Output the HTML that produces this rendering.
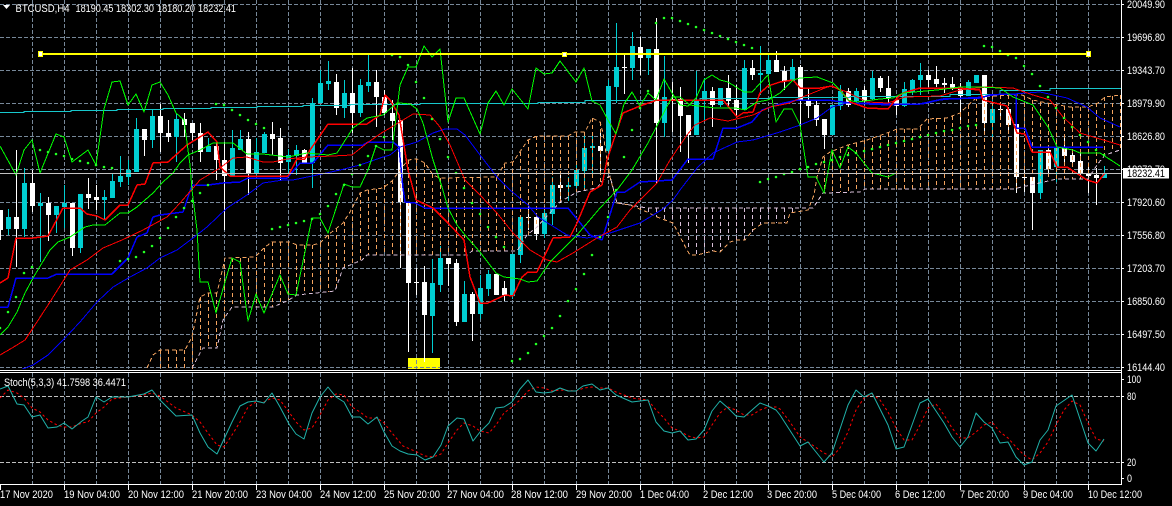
<!DOCTYPE html>
<html><head><meta charset="utf-8"><style>
html,body{margin:0;padding:0;background:#000;width:1172px;height:506px;overflow:hidden}
svg{display:block}
text{font-family:"Liberation Sans",sans-serif;font-size:11px;fill:#fff}
.g{stroke:#778899;stroke-width:1;stroke-dasharray:4 2;fill:none;shape-rendering:crispEdges}
.l{fill:none;stroke-linejoin:round;shape-rendering:crispEdges}
.n{fill:none;stroke-linejoin:round}
</style></head><body>
<svg width="1172" height="506" viewBox="0 0 1172 506" xmlns="http://www.w3.org/2000/svg">
<defs><clipPath id="m"><rect x="0" y="0" width="1121" height="369"/></clipPath><clipPath id="s"><rect x="0" y="373" width="1121" height="111"/></clipPath>
<path id="sar" fill="none" stroke-linecap="round" d="M0 328h.01M8 312h.01M16 297h.01M24 273h.01M32 267h.01M40 150h.01M48 152h.01M56 154h.01M64 156h.01M72 159h.01M80 161h.01M88 163h.01M96 165h.01M104 167h.01M112 168h.01M120 261h.01M128 259h.01M136 257h.01M144 252h.01M152 246h.01M160 238h.01M168 228h.01M176 217h.01M184 208h.01M192 201h.01M200 193h.01M208 185h.01M216 104h.01M224 105h.01M232 110h.01M240 115h.01M248 120h.01M256 124h.01M264 128h.01M272 229h.01M280 227h.01M288 225h.01M296 223h.01M304 221h.01M312 219h.01M320 214h.01M328 206h.01M336 194h.01M344 185h.01M352 174h.01M360 165h.01M368 156h.01M376 146h.01M384 137h.01M392 55h.01M400 57h.01M408 65h.01M416 82h.01M424 98h.01M432 119h.01M440 139h.01M448 157h.01M456 173h.01M464 188h.01M472 203h.01M480 214h.01M488 227h.01M496 237h.01M504 247h.01M512 361h.01M520 359h.01M528 353h.01M536 344h.01M544 336h.01M552 328h.01M560 316h.01M568 301h.01M576 289h.01M584 274h.01M592 255h.01M600 237h.01M608 217h.01M616 190h.01M624 157h.01M632 130h.01M640 108h.01M648 91h.01M656 23h.01M664 18h.01M672 18h.01M680 21h.01M688 24h.01M696 27h.01M704 30h.01M712 33h.01M720 36h.01M728 39h.01M736 42h.01M744 45h.01M752 48h.01M760 182h.01M768 179h.01M776 177h.01M784 174h.01M792 172h.01M800 169h.01M808 167h.01M816 164h.01M824 162h.01M832 160h.01M840 157h.01M848 155h.01M856 153h.01M864 151h.01M872 149h.01M880 147h.01M888 145h.01M896 143h.01M904 141h.01M912 139h.01M920 137h.01M928 135h.01M936 133h.01M944 131h.01M952 130h.01M960 128h.01M968 126h.01M976 125h.01M984 46h.01M992 47h.01M1000 51h.01M1008 55h.01M1016 58h.01M1024 66h.01M1032 74h.01M1040 86h.01M1048 97h.01M1056 108h.01M1064 118h.01M1072 127h.01M1080 135h.01M1088 142h.01M1096 150h.01M1104 155h.01"/>
</defs>
<rect width="1172" height="506" fill="#000"/>
<rect x="408" y="358" width="32" height="11" fill="#ffff00"/>
<path class="g" d="M0 4.5H1121M0 37.5H1121M0 70.5H1121M0 103.5H1121M0 136.5H1121M0 169.5H1121M0 202.5H1121M0 235.5H1121M0 268.5H1121M0 301.5H1121M0 334.5H1121M0 367.5H1121"/>
<path class="g" d="M32.5 0V369M64.5 0V369M96.5 0V369M128.5 0V369M160.5 0V369M192.5 0V369M224.5 0V369M256.5 0V369M288.5 0V369M320.5 0V369M352.5 0V369M384.5 0V369M416.5 0V369M448.5 0V369M480.5 0V369M512.5 0V369M544.5 0V369M576.5 0V369M608.5 0V369M640.5 0V369M672.5 0V369M704.5 0V369M736.5 0V369M768.5 0V369M800.5 0V369M832.5 0V369M864.5 0V369M896.5 0V369M928.5 0V369M960.5 0V369M992.5 0V369M1024.5 0V369M1056.5 0V369M1088.5 0V369"/>
<path class="g" d="M32.5 373V484M64.5 373V484M96.5 373V484M128.5 373V484M160.5 373V484M192.5 373V484M224.5 373V484M256.5 373V484M288.5 373V484M320.5 373V484M352.5 373V484M384.5 373V484M416.5 373V484M448.5 373V484M480.5 373V484M512.5 373V484M544.5 373V484M576.5 373V484M608.5 373V484M640.5 373V484M672.5 373V484M704.5 373V484M736.5 373V484M768.5 373V484M800.5 373V484M832.5 373V484M864.5 373V484M896.5 373V484M928.5 373V484M960.5 373V484M992.5 373V484M1024.5 373V484M1056.5 373V484M1088.5 373V484"/>
<path d="M0 396.5H1121M0 462.5H1121" stroke="#c0c0c0" stroke-dasharray="4 2" fill="none" shape-rendering="crispEdges"/>

<g clip-path="url(#m)">
<!-- white wicks -->
<path stroke="#fff" fill="none" shape-rendering="crispEdges" d="M.5 210V240M16.5 150V267M32.5 170V212M48.5 197V241M72.5 203V256M88.5 178V209M96.5 185V210M144.5 129V156M160.5 104V152M168.5 120V142M184.5 113V137M192.5 123V140M200.5 123V162M216.5 142V180M224.5 142V230M248.5 132V195M272.5 122V155M280.5 128V180M304.5 149V163M336.5 74V115M352.5 68V133M376.5 70V127M384.5 90V115M392.5 100V140M400.5 120V268M408.5 202V352M416.5 268V295M424.5 266V362M448.5 258V286M456.5 259V326M472.5 292V341M496.5 274V295M504.5 281V301M528.5 203V230M536.5 213V240M560.5 172V203M600.5 130V172M624.5 55V94M640.5 37V75M656.5 18V183M672.5 82V132M680.5 87V152M688.5 115V163M712.5 87V127M728.5 75V107M736.5 85V117M752.5 60V80M776.5 51V72M784.5 66V90M800.5 65V127M808.5 88V118M816.5 100V126M824.5 119V149M848.5 88V107M864.5 86V105M880.5 76V92M888.5 76V103M896.5 96V115M928.5 70V87M936.5 66V87M944.5 78V93M952.5 77V90M960.5 83V122M984.5 75V133M1000.5 105V120M1008.5 107V133M1016.5 124V193M1024.5 167V192M1032.5 177V230M1048.5 147V177M1064.5 137V166M1072.5 150V167M1080.5 150V175M1088.5 167V193M1096.5 168V205"/>
<!-- cyan wicks -->
<path stroke="#00CED1" fill="none" shape-rendering="crispEdges" d="M8.5 209V235M24.5 168V237M40.5 193V262M56.5 206V233M64.5 185V228M80.5 194V253M104.5 190V220M112.5 173V198M120.5 156V187M128.5 160V185M136.5 118V172M152.5 110V148M176.5 113V162M208.5 138V152M232.5 130V176M240.5 130V150M256.5 138V176M264.5 132V153M288.5 149V177M296.5 145V175M312.5 98V188M320.5 70V103M328.5 61V90M344.5 80V118M360.5 79V117M368.5 55V92M432.5 259V353M440.5 246V292M464.5 281V322M480.5 275V319M488.5 270V296M512.5 254V299M520.5 217V263M544.5 208V238M552.5 177V225M568.5 177V201M576.5 165V188M584.5 133V188M592.5 133V177M608.5 80V155M616.5 23V103M632.5 32V80M648.5 49V75M664.5 56V137M696.5 71V135M704.5 78V120M720.5 88V107M744.5 60V110M760.5 46V95M768.5 55V75M792.5 59V81M832.5 105V135M840.5 85V110M856.5 88V103M872.5 71V100M904.5 82V107M912.5 79V95M920.5 63V95M968.5 80V96M976.5 75V83M992.5 100V137M1040.5 150V199M1056.5 147V182M1104.5 166V178"/>
<!-- white bodies -->
<path fill="#fff" d="M-2 210h5v20h-5zM14 217h5v12h-5zM30 183h5v23h-5zM46 203h5v12h-5zM70 203h5v45h-5zM86 194h5v4h-5zM94 197h5v3h-5zM142 129h5v11h-5zM158 116h5v17h-5zM166 133h5v4h-5zM182 119h5v6h-5zM190 123h5v10h-5zM198 133h5v19h-5zM214 146h5v14h-5zM222 160h5v16h-5zM246 139h5v35h-5zM270 134h5v5h-5zM278 138h5v25h-5zM302 150h5v13h-5zM334 82h5v26h-5zM350 93h5v20h-5zM374 82h5v15h-5zM382 97h5v16h-5zM390 113h5v8h-5zM398 120h5v82h-5zM406 202h5v81h-5zM414 282h5v1h-5zM422 282h5v33h-5zM446 258h5v6h-5zM454 263h5v59h-5zM470 294h5v20h-5zM494 274h5v21h-5zM502 288h5v7h-5zM526 217h5v1h-5zM534 217h5v17h-5zM558 185h5v3h-5zM598 146h5v5h-5zM622 67h5v1h-5zM638 47h5v11h-5zM654 49h5v74h-5zM670 99h5v1h-5zM678 99h5v17h-5zM686 115h5v20h-5zM710 91h5v14h-5zM726 88h5v13h-5zM734 100h5v10h-5zM750 68h5v7h-5zM774 60h5v12h-5zM782 71h5v10h-5zM798 67h5v33h-5zM806 100h5v6h-5zM814 105h5v15h-5zM822 119h5v16h-5zM846 91h5v14h-5zM862 90h5v11h-5zM878 78h5v10h-5zM886 88h5v10h-5zM894 100h5v6h-5zM926 75h5v5h-5zM934 79h5v5h-5zM942 83h5v2h-5zM950 84h5v4h-5zM958 88h5v8h-5zM982 75h5v48h-5zM998 109h5v1h-5zM1006 109h5v16h-5zM1014 124h5v53h-5zM1022 177h5v1h-5zM1030 177h5v16h-5zM1046 150h5v19h-5zM1062 147h5v9h-5zM1070 155h5v7h-5zM1078 161h5v12h-5zM1086 173h5v3h-5zM1094 175h5v3h-5z"/>
<!-- cyan bodies -->
<path fill="#00CED1" d="M6 217h5v12h-5zM22 183h5v46h-5zM38 203h5v3h-5zM54 206h5v9h-5zM62 203h5v4h-5zM78 194h5v54h-5zM102 197h5v3h-5zM110 181h5v17h-5zM118 176h5v6h-5zM126 170h5v7h-5zM134 129h5v43h-5zM150 116h5v24h-5zM174 119h5v18h-5zM206 146h5v6h-5zM230 148h5v28h-5zM238 139h5v11h-5zM254 152h5v22h-5zM262 134h5v19h-5zM286 155h5v7h-5zM294 150h5v6h-5zM310 103h5v60h-5zM318 83h5v20h-5zM326 81h5v3h-5zM342 93h5v15h-5zM358 85h5v28h-5zM366 82h5v4h-5zM430 283h5v33h-5zM438 258h5v27h-5zM462 294h5v28h-5zM478 288h5v26h-5zM486 274h5v15h-5zM510 254h5v42h-5zM518 217h5v38h-5zM542 213h5v21h-5zM550 185h5v29h-5zM566 185h5v2h-5zM574 170h5v16h-5zM582 148h5v23h-5zM590 146h5v2h-5zM606 86h5v65h-5zM614 67h5v20h-5zM630 46h5v22h-5zM646 49h5v9h-5zM662 97h5v26h-5zM694 101h5v34h-5zM702 91h5v10h-5zM718 88h5v17h-5zM742 68h5v42h-5zM758 73h5v2h-5zM766 60h5v14h-5zM790 67h5v14h-5zM830 105h5v30h-5zM838 91h5v15h-5zM854 91h5v10h-5zM870 78h5v21h-5zM902 89h5v17h-5zM910 80h5v12h-5zM918 75h5v5h-5zM966 82h5v14h-5zM974 75h5v8h-5zM990 109h5v14h-5zM1038 150h5v43h-5zM1054 147h5v20h-5zM1102 173h5v5h-5z"/>

<!-- cloud verticals orange -->
<path fill="none" stroke="#F4A460" stroke-dasharray="4 3" shape-rendering="crispEdges" d="M160.5 350V369M168.5 350V369M176.5 350V369M184.5 350V369M192.5 337V369M200.5 297V353M208.5 293V348M216.5 293V348M224.5 265V320M232.5 258V307M240.5 258V307M248.5 258V307M256.5 257V307M264.5 248V307M272.5 242V307M280.5 242V304M288.5 242V300M296.5 245V295M304.5 245V294M312.5 245V293M320.5 243V292M328.5 235V292M336.5 228V290M344.5 222V268M352.5 210V265M360.5 193V261M368.5 190V255M376.5 189V255M384.5 185V255M392.5 180V255M400.5 170V255M408.5 160V255M416.5 159V255M424.5 163V255M432.5 174V255M440.5 178V255M448.5 178V255M456.5 178V255M464.5 178V255M472.5 178V251M480.5 178V251M488.5 178V251M496.5 177V251M504.5 164V251M512.5 162V251M520.5 152V251M528.5 140V235M536.5 136V228M544.5 136V220M552.5 136V212M560.5 136V202M568.5 136V197M576.5 133V192M584.5 132V190M592.5 118V189M600.5 122V185M608.5 155V178M824.5 157V193M832.5 152V192M840.5 149V192M848.5 145V192M856.5 143V191M864.5 140V189M872.5 138V189M880.5 136V189M888.5 133V189M896.5 129V189M904.5 129V189M912.5 129V189M920.5 127V189M928.5 119V189M936.5 118V189M944.5 118V189M952.5 116V189M960.5 113V189M968.5 105V189M976.5 97V189M984.5 96V189M992.5 95V189M1000.5 95V189M1008.5 95V189M1016.5 95V188M1024.5 96V186M1032.5 100V184M1040.5 102V182M1048.5 103V180M1056.5 105V179M1064.5 106V179M1072.5 107V179M1080.5 107V179M1088.5 107V179M1096.5 103V165M1104.5 97V155M1112.5 96V152M1120.5 95V150"/>
<!-- cloud verticals thistle -->
<path fill="none" stroke="#D8BFD8" stroke-dasharray="4 3" shape-rendering="crispEdges" d="M640.5 207V210M648.5 208V212M656.5 208V217M664.5 208V220M672.5 208V223M680.5 208V236M688.5 208V250M696.5 208V255M704.5 208V253M712.5 208V251M720.5 208V252M728.5 208V243M736.5 208V240M744.5 208V240M752.5 208V232M760.5 208V225M768.5 208V223M776.5 208V223M784.5 208V223M792.5 208V213"/>
<!-- span A -->
<path class="l" stroke="#F4A460" stroke-dasharray="4 3" d="M147 368L153 355L160 350L185 350L192 337L200 297L208 293L217 293L223 267L225 258L255 257L265 247L272 242L290 242L297 245L313 245L320 243L328 235L343 223L350 212L360 193L367 190L383 188L392 181L400 170L408 160L417 159L425 163L433 175L440 178L497 177L505 163L513 162L528 140L537 136L568 136L575 132L585 132L592 118L600 122L603 133L607 160L610 177L617 203L630 205L647 212L657 217L673 223L687 250L690 255L697 255L705 253L713 251L720 252L730 242L737 240L745 240L753 230L763 223L787 223L790 213L808 210L814 195L817 177L823 157L830 152L848 145L867 140L887 133L897 129L918 129L927 119L947 118L960 113L977 97L1013 95L1022 95L1033 100L1047 103L1070 107L1088 107L1098 103L1105 97L1120 95"/>
<!-- span B -->
<path class="l" stroke="#D8BFD8" stroke-dasharray="4 3" d="M192 368L200 353L203 348L217 348L223 320L232 307L273 307L287 301L297 295L335 291L343 268L362 260L367 255L467 255L472 251L517 251L527 235L537 227L560 202L577 192L597 188L603 180L610 176L617 203L630 205L647 208L813 208L823 193L860 192L865 189L1013 189L1057 179L1088 179L1097 165L1105 155L1120 150"/>

<!-- cyan line -->
<path class="l" stroke="#17C8CC" d="M0 112.5H24V111.5H71V110.5H117V109.5H163V108.5H211V107.5H257V106.5H303V105.5H350V104.5H420V103.5H538V102.5H585V100.5H700V98.5H770V97.5H850V96.5H950V94.5H1000V90.5H1050V88.5H1121"/>
<!-- blue smooth -->
<path class="l" stroke="#0000FF" d="M20 370L33 365L48 355L63 340L80 322L97 302L113 287L130 277L147 268L160 258L177 250L193 238L207 227L227 208L247 195L263 183L283 180L293 180L317 175L340 170L360 165L383 157L390 155L400 147L417 142L433 133L445 129L457 129L465 135L480 155L497 177L510 190L528 205L538 217L567 235L587 238L610 233L640 223L663 209L673 200L680 190L697 168L713 153L737 142L753 140L780 132L800 125L817 118L832 107L847 103L863 104L887 105L923 104L940 100L963 98L983 97L1000 94L1013 94L1040 92L1067 98L1087 107L1100 118L1120 127"/>
<!-- blue stepped -->
<path class="l" stroke="#0000FF" stroke-width="1.5" d="M0 307L8 307L16 278L48 278L57 274L112 274L128 258L137 237L147 233L153 217L160 215L183 212L192 185L208 185L223 183L240 182L248 178L287 178L300 163L313 163L328 145L363 145L368 142L393 142L399 147L403 188L405 202L415 203L425 208L568 208L590 235L602 240L617 192L625 192L640 182L672 180L688 159L713 159L723 128L737 128L752 122L762 110L780 104L797 100L827 100L850 103L890 104L920 104L943 99L980 98L990 95L1007 94L1016 94L1016 128L1025 128L1032 147L1103 147"/>
<!-- red smooth -->
<path class="l" stroke="#FF0000" d="M0 355L12 348L25 340L33 328L50 302L70 270L87 260L103 248L122 240L143 230L167 217L180 203L200 180L220 168L233 158L247 157L263 162L273 162L287 159L307 157L333 156L352 155L367 143L383 132L390 128L398 123L413 114L430 115L440 127L450 145L465 180L480 195L497 213L513 233L530 250L547 260L557 262L573 253L597 238L617 227L630 210L643 197L657 183L670 160L687 135L695 125L710 118L728 121L753 115L770 107L790 103L800 98L830 86L847 92L867 102L888 103L905 97L940 96L960 90L987 87L1013 88L1033 95L1050 100L1063 117L1080 133L1100 139L1120 145"/>
<!-- red stepped -->
<path class="l" stroke="#FF0000" stroke-width="1.5" d="M0 283L8 278L16 238L33 238L48 236L63 208L80 208L87 214L97 216L105 220L120 205L128 205L137 185L145 184L153 163L168 162L187 145L208 132L217 142L220 167L230 176L288 176L297 159L305 159L308 153L328 124L367 124L380 115L385 95L390 100L399 115L408 170L416 200L433 208L448 223L464 240L470 277L480 303L488 303L505 295L513 296L522 277L528 272L537 272L553 238L570 237L577 223L590 192L602 185L607 160L617 130L623 113L640 106L657 100L723 100L737 117L743 113L753 112L760 93L768 86L780 82L793 80L800 88L820 88L832 86L840 90L850 102L867 108L888 109L897 98L903 93L920 88L957 88L980 90L983 100L1007 106L1017 133L1025 134L1032 152L1050 152L1057 167L1067 167L1087 180L1097 183L1105 173"/>
<!-- green smooth -->
<path class="l" stroke="#00FF00" d="M0 335L8 327L17 312L25 293L33 278L42 263L50 250L58 242L70 237L85 227L93 225L105 225L120 213L128 213L137 207L153 193L163 182L173 173L180 163L188 155L200 150L213 143L233 143L247 154L263 154L288 157L307 153L328 155L337 153L353 128L367 118L383 115L397 103L400 103L410 104L417 109L423 123L433 160L442 187L448 208L457 225L465 235L480 252L496 273L504 277L520 279L528 282L537 281L550 262L577 235L600 208L617 190L632 170L648 143L661 118L672 97L680 97L690 105L715 108L736 108L745 110L757 102L768 100L780 93L793 80L800 78L817 77L833 83L840 90L848 100L857 102L880 99L893 98L903 93L937 90L960 87L980 87L1000 88L1013 97L1033 105L1048 127L1057 147L1073 150L1080 153L1100 153L1120 166"/>
<!-- green jagged -->
<path class="l" stroke="#00FF00" d="M0 146L16 175L24 150L32 140L40 173L56 134L64 137L72 162L88 150L96 165L104 109L112 82L120 81L128 105L136 94L144 112L152 85L160 82L168 95L176 113L184 120L190 165L192 190L197 230L200 282L208 282L216 313L232 258L240 262L248 321L256 294L264 313L280 275L288 294L296 295L312 218L320 218L328 233L344 184L352 187L360 187L368 170L376 146L384 150L392 150L400 85L408 67L416 67L424 46L432 57L440 49L448 122L456 98L464 98L480 134L488 103L496 91L504 105L512 89L528 109L536 68L544 74L552 73L560 61L576 82L584 68L592 101L600 105L608 120L616 134L624 104L632 92L640 106L648 93L656 100L664 79L672 93L680 105L688 106L696 98L704 80L712 75L720 80L728 82L736 87L744 92L752 92L768 75L776 122L784 109L792 109L800 125L808 177L816 177L824 193L832 150L840 168L848 147L856 153L872 173L888 177L896 173"/>
<!-- parabolic SAR -->
<use href="#sar" stroke="#00FF00" stroke-width="2.6"/>
<use href="#sar" stroke="#C8FFC8" stroke-width="1"/>
<!-- trendline -->
<path d="M40 54H1088" stroke="#ffff00" stroke-width="2" fill="none" shape-rendering="crispEdges"/>
<path d="M38.5 51.5h4v5h-4zM562.5 52.5h4v4h-4zM1086.5 51.5h4v5h-4z" fill="#fff" stroke="#ffff00" shape-rendering="crispEdges"/>
<!-- price line -->
<path d="M0 173.5H1121" stroke="#c0c0c0" fill="none" shape-rendering="crispEdges"/>
</g>

<!-- stochastic -->
<g clip-path="url(#s)">
<path class="n" stroke="#FF0000" stroke-dasharray="2.5 2.5" d="M0 398L8 390L17 393L24 398L32 408L40 412L48 420L57 425L64 427L72 427L82 423L88 422L96 413L104 407L112 399L128 397L144 395L152 393L160 396L176 408L192 415L200 422L208 433L217 445L224 447L232 435L240 422L248 407L256 402L264 402L272 398L280 400L289 412L296 422L304 430L312 428L320 415L328 400L336 394L344 395L352 407L360 412L368 418L377 418L384 423L392 433L403 446L417 452L425 456L433 457L441 454L448 443L457 430L464 423L473 426L480 431L489 433L496 425L504 413L512 407L520 400L528 391L536 387L544 388L552 391L560 390L576 391L584 388L592 387L600 388L608 388L616 392L632 398L648 400L656 410L664 418L672 428L680 431L688 436L696 438L704 437L712 425L720 413L728 407L736 410L744 415L752 415L760 410L768 407L776 407L780 409L790 422L800 437L808 442L824 453L832 457L840 448L848 432L856 410L864 398L872 394L880 400L888 412L896 428L904 440L912 440L920 425L928 408L936 404L944 415L952 428L960 438L968 438L976 432L984 425L992 422L1000 432L1008 438L1016 447L1024 455L1032 460L1040 453L1048 442L1056 425L1064 410L1072 401L1080 405L1088 423L1096 439L1104 441"/>
<path class="n" stroke="#20B2AA" d="M0 389L8 386L17 404L24 405L32 417L40 415L48 428L57 427L64 423L72 429L82 421L88 417L96 397L104 402L112 397L128 397L144 394L152 390L160 400L176 416L192 415L200 433L208 447L217 454L232 422L240 406L248 402L256 401L264 403L272 393L280 407L289 424L296 434L304 439L312 413L320 397L328 387L336 397L344 402L352 417L360 417L368 424L377 417L384 432L392 446L400 451L408 454L417 455L425 460L433 457L441 445L448 426L457 418L464 419L473 441L480 432L489 423L496 408L504 407L512 402L520 389L528 380L536 392L544 393L552 392L560 388L568 391L576 391L583 386L592 384L600 390L608 388L616 395L632 402L648 400L656 422L664 431L672 433L680 431L688 440L696 439L704 430L712 411L720 401L728 408L736 416L744 417L752 410L760 403L768 406L776 410L780 415L800 446L808 442L824 462L832 453L848 405L856 390L864 397L872 393L888 425L896 449L904 447L920 403L928 399L944 423L952 437L960 447L968 437L976 413L984 422L992 428L1000 443L1008 442L1016 457L1024 465L1032 462L1040 440L1048 430L1056 406L1072 395L1088 443L1096 451L1104 439"/>
</g>

<!-- window frame -->
<path d="M0 370.5H1122M0 372.5H1122M0 484.5H1122M1121.5 0V485" stroke="#fff" fill="none" shape-rendering="crispEdges"/>
<path d="M1121 4.5h3M1121 37.5h3M1121 70.5h3M1121 103.5h3M1121 136.5h3M1121 169.5h3M1121 202.5h3M1121 235.5h3M1121 268.5h3M1121 301.5h3M1121 334.5h3M1121 367.5h3M1121 379.5h3M1121 396.5h3M1121 462.5h3M1121 478.5h3M.5 484v6M64.5 484v6M128.5 484v6M192.5 484v6M256.5 484v6M320.5 484v6M384.5 484v6M448.5 484v6M512.5 484v6M576.5 484v6M640.5 484v6M704.5 484v6M768.5 484v6M832.5 484v6M896.5 484v6M960.5 484v6M1024.5 484v6M1088.5 484v6" stroke="#fff" fill="none" shape-rendering="crispEdges"/>

<!-- header -->
<path d="M3 5h7l-3.5 4z" fill="#fff"/>
<text x="15.5" y="12" textLength="54" lengthAdjust="spacingAndGlyphs">BTCUSD,H4</text>
<text x="75.5" y="12" textLength="38" lengthAdjust="spacingAndGlyphs">18190.45</text>
<text x="116" y="12" textLength="38" lengthAdjust="spacingAndGlyphs">18302.30</text>
<text x="157" y="12" textLength="38" lengthAdjust="spacingAndGlyphs">18180.20</text>
<text x="198" y="12" textLength="38" lengthAdjust="spacingAndGlyphs">18232.41</text>
<text x="4" y="386" textLength="122" lengthAdjust="spacingAndGlyphs">Stoch(5,3,3) 41.7598 36.4471</text>

<!-- price axis -->
<text x="1127" y="8" textLength="38" lengthAdjust="spacingAndGlyphs">20049.90</text>
<text x="1127" y="41" textLength="38" lengthAdjust="spacingAndGlyphs">19696.80</text>
<text x="1127" y="74" textLength="38" lengthAdjust="spacingAndGlyphs">19343.70</text>
<text x="1127" y="107" textLength="38" lengthAdjust="spacingAndGlyphs">18979.90</text>
<text x="1127" y="140" textLength="38" lengthAdjust="spacingAndGlyphs">18626.80</text>
<text x="1127" y="173" textLength="38" lengthAdjust="spacingAndGlyphs">18273.70</text>
<rect x="1123" y="168" width="46" height="10.5" fill="#fff"/>
<text x="1127" y="177" textLength="38" lengthAdjust="spacingAndGlyphs" style="fill:#000">18232.41</text>
<text x="1127" y="206" textLength="38" lengthAdjust="spacingAndGlyphs">17920.60</text>
<text x="1127" y="239" textLength="38" lengthAdjust="spacingAndGlyphs">17556.80</text>
<text x="1127" y="272" textLength="38" lengthAdjust="spacingAndGlyphs">17203.70</text>
<text x="1127" y="305" textLength="38" lengthAdjust="spacingAndGlyphs">16850.60</text>
<text x="1127" y="338" textLength="38" lengthAdjust="spacingAndGlyphs">16497.50</text>
<text x="1127" y="371" textLength="38" lengthAdjust="spacingAndGlyphs">16144.40</text>
<text x="1127" y="383" textLength="14" lengthAdjust="spacingAndGlyphs">100</text>
<text x="1127" y="400" textLength="9" lengthAdjust="spacingAndGlyphs">80</text>
<text x="1127" y="466" textLength="9" lengthAdjust="spacingAndGlyphs">20</text>
<text x="1127" y="482" textLength="5" lengthAdjust="spacingAndGlyphs">0</text>

<!-- time axis -->
<text x="0" y="498" textLength="53" lengthAdjust="spacingAndGlyphs">17 Nov 2020</text>
<text x="64" y="498" textLength="56" lengthAdjust="spacingAndGlyphs">19 Nov 04:00</text>
<text x="128" y="498" textLength="56" lengthAdjust="spacingAndGlyphs">20 Nov 12:00</text>
<text x="192" y="498" textLength="56" lengthAdjust="spacingAndGlyphs">21 Nov 20:00</text>
<text x="256" y="498" textLength="56" lengthAdjust="spacingAndGlyphs">23 Nov 04:00</text>
<text x="320" y="498" textLength="56" lengthAdjust="spacingAndGlyphs">24 Nov 12:00</text>
<text x="384" y="498" textLength="56" lengthAdjust="spacingAndGlyphs">25 Nov 20:00</text>
<text x="447" y="498" textLength="57" lengthAdjust="spacingAndGlyphs">27 Nov 04:00</text>
<text x="511" y="498" textLength="57" lengthAdjust="spacingAndGlyphs">28 Nov 12:00</text>
<text x="576" y="498" textLength="56" lengthAdjust="spacingAndGlyphs">29 Nov 20:00</text>
<text x="640" y="498" textLength="49" lengthAdjust="spacingAndGlyphs">1 Dec 04:00</text>
<text x="703" y="498" textLength="50" lengthAdjust="spacingAndGlyphs">2 Dec 12:00</text>
<text x="767" y="498" textLength="50" lengthAdjust="spacingAndGlyphs">3 Dec 20:00</text>
<text x="832" y="498" textLength="49" lengthAdjust="spacingAndGlyphs">5 Dec 04:00</text>
<text x="895" y="498" textLength="50" lengthAdjust="spacingAndGlyphs">6 Dec 12:00</text>
<text x="960" y="498" textLength="49" lengthAdjust="spacingAndGlyphs">7 Dec 20:00</text>
<text x="1023" y="498" textLength="50" lengthAdjust="spacingAndGlyphs">9 Dec 04:00</text>
<text x="1088" y="498" textLength="54" lengthAdjust="spacingAndGlyphs">10 Dec 12:00</text>
</svg>
</body></html>
